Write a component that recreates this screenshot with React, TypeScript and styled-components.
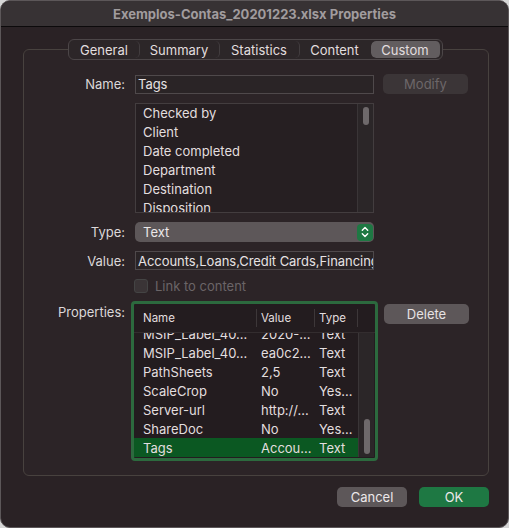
import React from "react";
import styled, { createGlobalStyle } from "styled-components";

const Global = createGlobalStyle`
  html, body { margin: 0; padding: 0; background: #d6d6d6; }
  body { font-family: Inter, "Liberation Sans", sans-serif; -webkit-font-smoothing: antialiased; }
  * { box-sizing: border-box; }
`;

const Window = styled.div`
  width: 509px;
  height: 528px;
  background: #2a2225;
  border: 1px solid #5c5759;
  border-radius: 10px;
  overflow: hidden;
  display: flex;
  flex-direction: column;
  color: #dedadb;
  font-size: 13px;
`;

const TitleBar = styled.div`
  height: 26px;
  flex: none;
  background: #373234;
  border-bottom: 1px solid #0c0a0b;
  display: flex;
  align-items: center;
  justify-content: center;
  font-weight: 700;
  font-size: 13px;
  color: #a19c9e;
`;

const TabRow = styled.div`
  display: flex;
  justify-content: center;
  margin-top: 12px;
  position: relative;
  z-index: 1;
`;

const TabBar = styled.div`
  display: flex;
  height: 21px;
  margin-left: 1px;
  background: #2c2628;
  border: 1px solid #4c4648;
  border-radius: 6px;
  padding: 1px;
`;

const Tab = styled.div<{ $w: number; $active?: boolean; $sep?: boolean }>`
  width: ${(p) => p.$w}px;
  display: flex;
  align-items: center;
  justify-content: center;
  font-size: 13px;
  color: #e2dedf;
  border-radius: 5px;
  background: ${(p) => (p.$active ? "#625d5f" : "transparent")};
  border-right: 1px solid ${(p) => (p.$sep ? "#423d3f" : "transparent")};
  background-clip: padding-box;
`;

const GroupBox = styled.div`
  margin: -11px 0 0 22px;
  width: 466px;
  height: 427px;
  border: 1px solid #48423f;
  border-radius: 6px;
  background: #2c2427;
  padding-top: 24px;
  display: flex;
  flex-direction: column;
  gap: 9px;
`;

const Row = styled.div<{ $top?: boolean }>`
  display: flex;
  align-items: ${(p) => (p.$top ? "flex-start" : "center")};
`;

const Label = styled.div<{ $pt?: number }>`
  width: 101px;
  margin-right: 10px;
  text-align: right;
  font-size: 13px;
  color: #dcd8d9;
  padding-top: ${(p) => p.$pt ?? 0}px;
`;

const Spacer = styled.div`
  width: 101px;
  margin-right: 10px;
`;

const TextField = styled.div`
  width: 239px;
  height: 19px;
  border: 1px solid #4f494b;
  background: #2a2426;
  padding: 0 2px;
  display: flex;
  align-items: center;
  white-space: nowrap;
  overflow: hidden;
  font-size: 13px;
  letter-spacing: -0.05px;
  color: #e6e2e3;
`;

const SideButton = styled.div<{ $disabled?: boolean; $mt?: number; $ml?: number }>`
  width: 85px;
  height: 20px;
  margin-left: ${(p) => p.$ml ?? 9}px;
  margin-top: ${(p) => p.$mt ?? 0}px;
  border-radius: 5px;
  display: flex;
  align-items: center;
  justify-content: center;
  font-size: 13px;
  background: ${(p) => (p.$disabled ? "#3b3537" : "#5d5759")};
  color: ${(p) => (p.$disabled ? "#6d6769" : "#e6e2e3")};
`;

const ListBox = styled.div`
  width: 239px;
  height: 110px;
  border: 1px solid #433d3f;
  background: #261f22;
  display: flex;
  overflow: hidden;
`;

const ListItems = styled.div`
  flex: 1;
  display: flex;
  flex-direction: column;
`;

const ListItem = styled.div`
  height: 19px;
  flex: none;
  line-height: 19px;
  padding-left: 7px;
  font-size: 13px;
  color: #e2dedf;
`;

const ScrollTrack = styled.div<{ $justify?: string; $pad?: string }>`
  width: 16px;
  flex: none;
  background: #2b2628;
  border-left: 1px solid #3a3537;
  display: flex;
  flex-direction: column;
  align-items: center;
  justify-content: ${(p) => p.$justify ?? "flex-start"};
  padding: ${(p) => p.$pad ?? "3px 0"};
`;

const Thumb = styled.div<{ $h: number }>`
  width: 6px;
  height: ${(p) => p.$h}px;
  border-radius: 3px;
  background: #6e696b;
`;

const Popup = styled.div`
  width: 239px;
  height: 20px;
  border-radius: 5px;
  background: #5d5759;
  display: flex;
  align-items: center;
  justify-content: space-between;
  padding: 0 1px 0 8px;
  font-size: 13px;
  color: #ece8e9;
`;

const Stepper = styled.div`
  width: 16px;
  height: 17px;
  border-radius: 4px;
  background: #1e7843;
  display: flex;
  align-items: center;
  justify-content: center;
`;

const CheckRow = styled.div`
  display: flex;
  align-items: center;
  height: 14px;
  gap: 7px;
  margin-left: -1px;
  font-size: 13px;
  color: #6b6567;
`;

const CheckBox = styled.div`
  width: 14px;
  height: 14px;
  border-radius: 3px;
  background: #3a3436;
  border: 1px solid #444;
`;

const FocusRing = styled.div`
  margin-left: -4px;
  margin-top: -1px;
  width: 247px;
  height: 160px;
  border: 3px solid #2c6a3e;
  border-radius: 4px;
  background: #231c1f;
  display: flex;
  flex-direction: column;
  overflow: hidden;
`;

const HeaderRow = styled.div`
  height: 29px;
  flex: none;
  display: flex;
  align-items: center;
  border-bottom: 1px solid #332d2f;
  font-size: 11.5px;
  color: #e2dedf;
`;

const Cell = styled.div<{ $w: number; $pl: number; $sep?: boolean }>`
  width: ${(p) => p.$w}px;
  flex: none;
  padding-left: ${(p) => p.$pl}px;
  white-space: nowrap;
  overflow: hidden;
  align-self: stretch;
  display: flex;
  align-items: center;
  position: relative;
  ${(p) =>
    p.$sep
      ? `&::after { content: ""; position: absolute; right: 0; top: 5px; bottom: 5px; width: 1px; background: #3d3739; }`
      : ""}
`;

const TableBody = styled.div`
  flex: 1;
  display: flex;
  overflow: hidden;
  padding-bottom: 1px;
`;

const Rows = styled.div`
  width: 224px;
  display: flex;
  flex-direction: column;
  justify-content: flex-end;
  overflow: hidden;
`;

const DataRow = styled.div<{ $sel?: boolean }>`
  height: 19px;
  flex: none;
  display: flex;
  font-size: 13px;
  color: #e2dedf;
  background: ${(p) => (p.$sel ? "#0b5822" : "transparent")};
`;

const Footer = styled.div`
  display: flex;
  justify-content: flex-end;
  gap: 12px;
  margin-top: 11px;
  padding-right: 19px;
`;

const DialogButton = styled.div<{ $primary?: boolean }>`
  width: 70px;
  height: 20px;
  border-radius: 5px;
  display: flex;
  align-items: center;
  justify-content: center;
  font-size: 13px;
  color: #ece8e9;
  background: ${(p) => (p.$primary ? "#1e7843" : "#5d5759")};
`;

const tabs = [
  { t: "General", w: 70 },
  { t: "Summary", w: 80 },
  { t: "Statistics", w: 80 },
  { t: "Content", w: 71 },
  { t: "Custom", w: 70 },
];

const names = ["Checked by", "Client", "Date completed", "Department", "Destination", "Disposition"];

const rows = [
  ["MSIP_Label_40…", "2020-…", "Text"],
  ["MSIP_Label_40…", "ea0c2…", "Text"],
  ["PathSheets", "2,5", "Text"],
  ["ScaleCrop", "No", "Yes…"],
  ["Server-url", "http://…", "Text"],
  ["ShareDoc", "No", "Yes…"],
  ["Tags", "Accou…", "Text"],
];

export default function App() {
  return (
    <>
      <Global />
      <Window>
        <TitleBar>Exemplos-Contas_20201223.xlsx Properties</TitleBar>
        <TabRow>
          <TabBar>
            {tabs.map((t, i) => (
              <Tab key={t.t} $w={t.w} $active={i === 4} $sep={i < 3}>
                {t.t}
              </Tab>
            ))}
          </TabBar>
        </TabRow>
        <GroupBox>
          <Row>
            <Label>Name:</Label>
            <TextField>Tags</TextField>
            <SideButton $disabled>Modify</SideButton>
          </Row>
          <Row>
            <Spacer />
            <ListBox>
              <ListItems>
                {names.map((n) => (
                  <ListItem key={n}>{n}</ListItem>
                ))}
              </ListItems>
              <ScrollTrack>
                <Thumb $h={18} />
              </ScrollTrack>
            </ListBox>
          </Row>
          <Row>
            <Label>Type:</Label>
            <Popup>
              <span>Text</span>
              <Stepper>
                <svg width="8" height="12" viewBox="0 0 8 12" fill="none" stroke="#ffffff" strokeWidth="1.4" strokeLinecap="round" strokeLinejoin="round">
                  <path d="M1.3 4.3 L4 1.6 L6.7 4.3" />
                  <path d="M1.3 7.7 L4 10.4 L6.7 7.7" />
                </svg>
              </Stepper>
            </Popup>
          </Row>
          <Row>
            <Label>Value:</Label>
            <TextField>Accounts,Loans,Credit Cards,Financing</TextField>
          </Row>
          <Row>
            <Spacer />
            <CheckRow>
              <CheckBox />
              <span>Link to content</span>
            </CheckRow>
          </Row>
          <Row $top>
            <Label $pt={2}>Properties:</Label>
            <FocusRing>
              <HeaderRow>
                <Cell $w={123} $pl={9} $sep>Name</Cell>
                <Cell $w={58} $pl={4} $sep>Value</Cell>
                <Cell $w={43} $pl={4} $sep>Type</Cell>
              </HeaderRow>
              <TableBody>
                <Rows>
                  {rows.map((r, i) => (
                    <DataRow key={i} $sel={i === rows.length - 1}>
                      <Cell $w={123} $pl={9}>{r[0]}</Cell>
                      <Cell $w={58} $pl={4}>{r[1]}</Cell>
                      <Cell $w={43} $pl={4}>{r[2]}</Cell>
                    </DataRow>
                  ))}
                </Rows>
                <ScrollTrack $justify="flex-end" $pad="0 0 3px">
                  <Thumb $h={35} />
                </ScrollTrack>
              </TableBody>
            </FocusRing>
            <SideButton $mt={2} $ml={6}>Delete</SideButton>
          </Row>
        </GroupBox>
        <Footer>
          <DialogButton>Cancel</DialogButton>
          <DialogButton $primary>OK</DialogButton>
        </Footer>
      </Window>
    </>
  );
}
